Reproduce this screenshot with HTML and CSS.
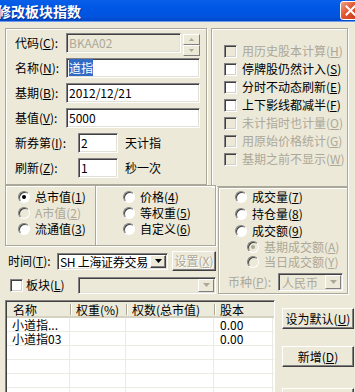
FILE: index.html
```html
<!DOCTYPE html>
<html lang="zh-CN">
<head>
    <meta charset="UTF-8">
    <meta name="viewport" content="width=device-width, initial-scale=1.0">
    <title>修改板块指数</title>
    <link rel="stylesheet" href="styles.css">
</head>
<body>
    <div class="window">
        <div class="titlebar">
            <span class="title">修改板块指数</span>
            <span class="close-btn">
                <svg width="11" height="11" viewBox="0 0 11 11"><path d="M1.5 1.5 L9.5 9.5 M9.5 1.5 L1.5 9.5" stroke="#fff" stroke-width="2" stroke-linecap="square"/></svg>
            </span>
        </div>

        <div class="client">
            <!-- 基本信息 + 选项 -->
            <div class="top-row">
                <div class="panel base-panel">
                    <div class="field-row">
                        <span class="lbl">代码(<u>C</u>):</span>
                        <div class="edit edit-code disabled">BKAA02</div>
                        <div class="spin">
                            <span class="spin-btn"><svg width="5" height="3" viewBox="0 0 5 3"><path d="M2.5 0 L5 3 L0 3 Z" fill="#aca899"/></svg></span>
                            <span class="spin-btn"><svg width="5" height="3" viewBox="0 0 5 3"><path d="M0 0 L5 0 L2.5 3 Z" fill="#aca899"/></svg></span>
                        </div>
                    </div>
                    <div class="field-row">
                        <span class="lbl">名称(<u>N</u>):</span>
                        <div class="edit edit-wide"><span class="selected">道指</span></div>
                    </div>
                    <div class="field-row">
                        <span class="lbl">基期(<u>B</u>):</span>
                        <div class="edit edit-wide">2012/12/21</div>
                    </div>
                    <div class="field-row">
                        <span class="lbl">基值(<u>V</u>):</span>
                        <div class="edit edit-wide">5000</div>
                    </div>
                    <div class="field-row">
                        <span class="lbl lbl-long">新券第(<u>I</u>):</span>
                        <div class="edit edit-small">2</div>
                        <span class="suffix">天计指</span>
                    </div>
                    <div class="field-row">
                        <span class="lbl lbl-long">刷新(<u>Z</u>):</span>
                        <div class="edit edit-small">1</div>
                        <span class="suffix">秒一次</span>
                    </div>
                </div>

                <div class="panel option-panel">
                    <div class="check-row disabled"><span class="chk"></span>用历史股本计算(<u>H</u>)</div>
                    <div class="check-row"><span class="chk"></span>停牌股仍然计入(<u>S</u>)</div>
                    <div class="check-row"><span class="chk"></span>分时不动态刷新(<u>E</u>)</div>
                    <div class="check-row"><span class="chk"></span>上下影线都减半(<u>F</u>)</div>
                    <div class="check-row disabled"><span class="chk"></span>未计指时也计量(<u>O</u>)</div>
                    <div class="check-row disabled"><span class="chk"></span>用原始价格统计(<u>G</u>)</div>
                    <div class="check-row disabled"><span class="chk"></span>基期之前不显示(<u>W</u>)</div>
                </div>
            </div>

            <!-- 权重方式 -->
            <div class="mid-row">
                <div class="mid-left">
                    <div class="panel weight-panel">
                        <div class="radio-col">
                            <div class="radio-row"><span class="radio checked"></span>总市值(<u>1</u>)</div>
                            <div class="radio-row disabled"><span class="radio"></span>A市值(<u>2</u>)</div>
                            <div class="radio-row"><span class="radio"></span>流通值(<u>3</u>)</div>
                        </div>
                        <div class="radio-col radio-col-2">
                            <div class="radio-row"><span class="radio"></span>价格(<u>4</u>)</div>
                            <div class="radio-row"><span class="radio"></span>等权重(<u>5</u>)</div>
                            <div class="radio-row"><span class="radio"></span>自定义(<u>6</u>)</div>
                        </div>
                    </div>

                    <div class="time-row">
                        <span class="time-lbl">时间(<u>T</u>):</span>
                        <div class="combo combo-time">
                            <span class="combo-text">SH 上海证券交易</span>
                            <span class="combo-btn"><svg width="7" height="4" viewBox="0 0 7 4"><path d="M0 0 L7 0 L3.5 4 Z" fill="#000"/></svg></span>
                        </div>
                        <button class="btn btn-set" disabled>设置(<u>X</u>)</button>
                    </div>

                    <div class="block-row">
                        <span class="chk"></span>
                        <span class="block-lbl">板块(<u>L</u>)</span>
                        <div class="combo combo-block disabled">
                            <span class="combo-text"></span>
                            <span class="combo-btn"><svg width="7" height="4" viewBox="0 0 7 4"><path d="M0 0 L7 0 L3.5 4 Z" fill="#aca899"/></svg></span>
                        </div>
                    </div>
                </div>

                <div class="panel volume-panel">
                    <div class="radio-row vol"><span class="radio"></span>成交量(<u>7</u>)</div>
                    <div class="radio-row vol"><span class="radio"></span>持仓量(<u>8</u>)</div>
                    <div class="radio-row vol"><span class="radio"></span>成交额(<u>9</u>)</div>
                    <div class="radio-row sub disabled"><span class="radio checked"></span>基期成交额(<u>A</u>)</div>
                    <div class="radio-row sub disabled"><span class="radio"></span>当日成交额(<u>Y</u>)</div>
                    <div class="currency-row disabled">
                        <span class="currency-lbl">币种(<u>P</u>):</span>
                        <div class="combo combo-currency disabled">
                            <span class="combo-text">人民币</span>
                            <span class="combo-btn"><svg width="7" height="4" viewBox="0 0 7 4"><path d="M0 0 L7 0 L3.5 4 Z" fill="#aca899"/></svg></span>
                        </div>
                    </div>
                </div>
            </div>

            <!-- 成分股列表 -->
            <div class="list-row">
                <div class="listview">
                    <div class="lv-header">
                        <span class="lv-col c1">名称</span>
                        <span class="lv-col c2">权重(%)</span>
                        <span class="lv-col c3">权数(总市值)</span>
                        <span class="lv-col c4">股本</span>
                    </div>
                    <div class="lv-row">
                        <span class="lv-col c1">小道指...</span>
                        <span class="lv-col c2"></span>
                        <span class="lv-col c3"></span>
                        <span class="lv-col c4">0.00</span>
                    </div>
                    <div class="lv-row">
                        <span class="lv-col c1">小道指03</span>
                        <span class="lv-col c2"></span>
                        <span class="lv-col c3"></span>
                        <span class="lv-col c4">0.00</span>
                    </div>
                    <div class="lv-row"><span class="lv-col c1"></span><span class="lv-col c2"></span><span class="lv-col c3"></span><span class="lv-col c4"></span></div>
                    <div class="lv-row"><span class="lv-col c1"></span><span class="lv-col c2"></span><span class="lv-col c3"></span><span class="lv-col c4"></span></div>
                    <div class="lv-row"><span class="lv-col c1"></span><span class="lv-col c2"></span><span class="lv-col c3"></span><span class="lv-col c4"></span></div>
                    <div class="lv-row"><span class="lv-col c1"></span><span class="lv-col c2"></span><span class="lv-col c3"></span><span class="lv-col c4"></span></div>
                </div>
                <div class="side-btns">
                    <button class="btn btn-side">设为默认(<u>U</u>)</button>
                    <button class="btn btn-side btn-add">新增(<u>D</u>)</button>
                    <button class="btn btn-side btn-del">删除(<u>R</u>)</button>
                </div>
            </div>
        </div>
    </div>
</body>
</html>
```

FILE: styles.css
```css
* {
    box-sizing: border-box;
}
body {
    margin: 0;
    background-color: #ece9d8;
    font-family: "Noto Sans CJK SC", "Liberation Sans", sans-serif;
    font-size: 12px;
    line-height: 14px;
    color: #000;
}
u {
    text-decoration: underline;
    text-underline-offset: 1px;
}
.window {
    width: 355px;
    height: 392px;
    overflow: hidden;
    background-color: #ece9d8;
}

/* 标题栏 */
.titlebar {
    height: 22px;
    display: flex;
    align-items: center;
    justify-content: space-between;
    background: linear-gradient(#0a5fe8, #0058e6 30%, #0053dd 80%, #0048c8);
    border-bottom: 1px solid #6d9bf0;
}
.title {
    margin-left: -3px;
    color: #fff;
    font-weight: bold;
    font-size: 14px;
    line-height: 16px;
    text-shadow: 1px 1px 0 rgba(0, 20, 90, 0.5);
}
.close-btn {
    width: 21px;
    height: 19px;
    margin-right: -6px;
    display: flex;
    align-items: center;
    justify-content: center;
    border: 1px solid #fff;
    border-radius: 3px;
    background: linear-gradient(135deg, #f0a08a, #e2532e 45%, #c7381a);
}

.client {
    padding: 6px 0 0 5px;
}

/* 蚀刻边框 */
.panel {
    border: 1px solid #aca899;
    box-shadow: inset 1px 1px 0 #fff, 1px 1px 0 #fff;
}

.top-row {
    display: flex;
    gap: 4px;
    height: 157px;
}
.base-panel {
    width: 202px;
    height: 157px;
    padding: 4px 0 0 9px;
}
.field-row {
    display: flex;
    align-items: center;
    height: 20px;
    margin-bottom: 5px;
}
.lbl {
    width: 51px;
    white-space: nowrap;
}
.lbl-long {
    width: 63px;
}
.edit {
    height: 20px;
    padding: 2px 0 0 2px;
    background-color: #fff;
    border: 1px solid;
    border-color: #848284 #fff #fff #848284;
    box-shadow: inset 1px 1px 0 #404040, inset -1px -1px 0 #e2e0d7;
    white-space: nowrap;
}
.edit.disabled {
    background-color: #ece9d8;
    color: #aca899;
}
.edit-code {
    width: 115px;
}
.edit-wide {
    width: 134px;
}
.edit-small {
    width: 40px;
}
.selected {
    background-color: #316ac5;
    color: #fff;
}
.suffix {
    margin-left: 7px;
}
.spin {
    margin-left: 2px;
    width: 17px;
    height: 22px;
    align-self: flex-start;
    margin-top: 1px;
    display: flex;
    flex-direction: column;
}
.spin-btn {
    flex: 1;
    display: flex;
    align-items: center;
    justify-content: center;
    border: 1px solid;
    border-color: #fff #808080 #808080 #fff;
    background-color: #ece9d8;
}

.option-panel {
    width: 137px;
    height: 159px;
    padding: 13px 0 0 12px;
}
.check-row {
    display: flex;
    align-items: center;
    height: 18px;
    white-space: nowrap;
}
.chk {
    width: 13px;
    height: 13px;
    margin-right: 5px;
    flex-shrink: 0;
    background-color: #fff;
    border: 1px solid;
    border-color: #808080 #fff #fff #808080;
    box-shadow: inset 1px 1px 0 #404040, inset -1px -1px 0 #d4d0c8;
}
.disabled {
    color: #aca899;
}
.check-row.disabled .chk {
    background-color: #ece9d8;
}

/* 单选 */
.mid-row {
    display: flex;
    gap: 2px;
}
.mid-left {
    width: 211px;
}
.weight-panel {
    height: 61px;
    display: flex;
}
.radio-col {
    width: 90px;
    padding: 3px 0 0 12px;
    border-right: 1px solid #aca899;
}
.radio-col-2 {
    width: 119px;
    padding-left: 27px;
    border-right: none;
    box-shadow: inset 1px 0 0 #fff;
}
.radio-row {
    display: flex;
    align-items: center;
    height: 16px;
    white-space: nowrap;
}
.radio {
    position: relative;
    width: 12px;
    height: 12px;
    margin-right: 5px;
    flex-shrink: 0;
    border-radius: 50%;
    background-color: #fff;
    border: 1px solid;
    border-color: #808080 #fff #fff #808080;
    box-shadow: inset 1px 1px 0 #404040;
}
.radio-row.disabled .radio {
    background-color: #ece9d8;
}
.radio.checked::after {
    content: "";
    position: absolute;
    left: 3px;
    top: 3px;
    width: 4px;
    height: 4px;
    border-radius: 50%;
    background-color: #000;
}
.radio-row.disabled .radio.checked::after {
    background-color: #aca899;
}

.time-row {
    display: flex;
    align-items: center;
    height: 20px;
    margin-top: 5px;
    padding-left: 3px;
}
.time-lbl {
    width: 49px;
    white-space: nowrap;
}
.combo {
    display: flex;
    align-items: stretch;
    background-color: #fff;
    border: 1px solid;
    border-color: #848284 #fff #fff #848284;
    box-shadow: inset 1px 1px 0 #404040, inset -1px -1px 0 #e2e0d7;
    padding: 1px;
}
.combo.disabled {
    background-color: #ece9d8;
    color: #aca899;
}
.combo-text {
    flex: 1;
    padding-left: 2px;
    line-height: 13px;
    white-space: nowrap;
}
.combo-btn {
    width: 16px;
    flex-shrink: 0;
    display: flex;
    align-items: center;
    justify-content: center;
    background-color: #ece9d8;
    border: 1px solid;
    border-color: #fff #404040 #404040 #fff;
    box-shadow: inset -1px -1px 0 #808080;
}
.combo-time {
    width: 111px;
    height: 17px;
}
.combo-time .combo-text {
    padding-left: 1px;
    letter-spacing: -0.3px;
}
.btn {
    font-family: inherit;
    font-size: 12px;
    line-height: 14px;
    color: #000;
    padding: 0;
    background-color: #ece9d8;
    border: 1px solid;
    border-color: #fff #404040 #404040 #fff;
    box-shadow: inset -1px -1px 0 #808080;
    white-space: nowrap;
}
.btn:disabled {
    color: #aca899;
    text-shadow: 1px 1px 0 #fff;
}
.btn-set {
    width: 44px;
    height: 20px;
    margin-left: 4px;
}

.block-row {
    display: flex;
    align-items: center;
    height: 18px;
    margin-top: 5px;
    padding-left: 5px;
}
.block-row .chk {
    margin-right: 3px;
}
.block-lbl {
    width: 53px;
    white-space: nowrap;
}
.combo-block {
    width: 140px;
    height: 17px;
}
.combo-block .combo-btn {
    border-color: #fff #808080 #808080 #fff;
    box-shadow: none;
}

.volume-panel {
    width: 130px;
    height: 107px;
    margin-top: 2px;
    padding: 0 0 0 9px;
}
.radio-row.vol {
    height: 17px;
    padding-left: 7px;
}
.radio-row.sub {
    height: 15px;
    padding-left: 19px;
}
.currency-row {
    display: flex;
    align-items: center;
    margin-top: 4px;
    height: 18px;
}
.currency-lbl {
    width: 50px;
    white-space: nowrap;
}
.combo-currency {
    width: 65px;
    height: 18px;
}
.combo-currency .combo-text {
    padding-top: 1px;
}
.combo-currency .combo-btn {
    border-color: #fff #808080 #808080 #fff;
    box-shadow: none;
}

/* 列表 */
.list-row {
    display: flex;
    margin-top: 6px;
}
.listview {
    width: 270px;
    height: 100px;
    background-color: #fff;
    border: 1px solid;
    border-color: #848284 #fff #fff #848284;
    box-shadow: inset 1px 1px 0 #404040;
    padding: 1px 0 0 1px;
}
.lv-header {
    display: flex;
    height: 16px;
    background-color: #ebeadb;
    border-bottom: 2px solid #d6d2c2;
}
.lv-header .lv-col {
    position: relative;
    padding: 1px 0 0 6px;
}
.lv-header .lv-col + .lv-col::before {
    content: "";
    position: absolute;
    left: 0;
    top: 2px;
    width: 1px;
    height: 11px;
    background-color: #aca899;
    box-shadow: 1px 0 0 #fff;
}
.lv-col {
    white-space: nowrap;
}
.c1 { width: 63px; }
.c2 { width: 56px; }
.c3 { width: 88px; }
.c4 { width: 59px; }
.lv-row {
    display: flex;
    height: 14px;
    border-bottom: 1px solid #ecebe3;
}
.lv-row .lv-col {
    padding-left: 5px;
    border-right: 1px solid #ecebe3;
    line-height: 13px;
}
.lv-row .c4 {
    padding-left: 6px;
}

.side-btns {
    display: flex;
    flex-direction: column;
    margin-left: 7px;
    padding-top: 8px;
}
.btn-side {
    width: 72px;
    height: 21px;
}
.btn-add {
    margin-top: 17px;
}
.btn-del {
    margin-top: 21px;
}
```
